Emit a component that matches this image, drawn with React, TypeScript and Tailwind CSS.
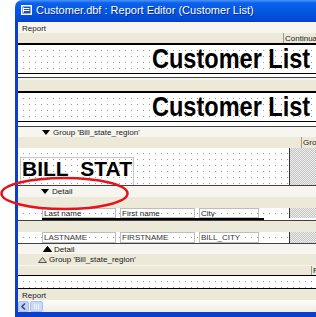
import React from "react"

const dots = "bg-[linear-gradient(90deg,#fff_5px,transparent_5px),linear-gradient(#fff_5px,#9a9a9a_5px)] bg-[length:6px_6px]"
const hatch = "bg-[repeating-conic-gradient(#c6c6c6_0%_25%,#ebebeb_0%_50%)] bg-[length:2px_2px]"
const beige = "bg-[#ece9d8]"
const light = "bg-[#f6f5ef]"

const DownTri = () => (
    <svg width="8" height="5" viewBox="0 0 8 5"><polygon points="0,0 8,0 4,5" fill="#000" /></svg>
)
const UpTri = ({ hollow }: { hollow?: boolean }) => (
    <svg width="9" height="6" viewBox="0 0 9 6">
        <polygon points="0.5,5.5 8.5,5.5 4.5,0.5" fill={hollow ? "#d8d6c8" : "#000"} stroke={hollow ? "#555" : "#000"} strokeWidth="1" />
    </svg>
)

const Field = ({ text, className }: { text: string, className: string }) => (
    <div className={`h-full border border-[#bdbdbd] pl-[1px] pt-[1px] whitespace-nowrap overflow-hidden ${className}`}>
        <span className="bg-white">{text}</span>
    </div>
)

export default function App() {
    return (
        <div className="relative w-[316px] h-[317px] overflow-hidden bg-white font-['Liberation_Sans',Arial,sans-serif] text-[8px] leading-[8px] text-[#1a1a1a]">
            <div className="ml-[15px] w-[320px] flex flex-col">
                {/* title bar */}
                <div className="h-[20px] rounded-tl-[7px] bg-[linear-gradient(to_bottom,#4a93f8_0%,#0b61ea_15%,#0458e4_55%,#0349d2_100%)] flex items-center pl-[6px] gap-[4px]">
                    <svg width="11" height="10" viewBox="0 0 11 10">
                        <rect x="0.5" y="0.5" width="10" height="9" fill="#fff" stroke="#fff" />
                        <rect x="1.5" y="1.5" width="8" height="7" fill="#1d4fc4" />
                        <rect x="3" y="3" width="5.5" height="1" fill="#fff" />
                        <rect x="3" y="5" width="5.5" height="1" fill="#fff" />
                        <rect x="2" y="2.5" width="1" height="5" fill="#fff" />
                    </svg>
                    <span className="text-white text-[11px] leading-[11px] [text-shadow:1px_1px_0_#0a2a8a]">Customer.dbf : Report Editor (Customer List)</span>
                </div>

                <div className="flex flex-col border-l-[3px] border-t-[2px] border-b-[5px] border-[#0a3fd0] bg-white">
                    {/* Report header */}
                    <div className={`h-[11px] ${light} pl-[4px] pt-[3px]`}>Report</div>
                    <div className={`h-[10px] ${beige} flex`}>
                        <div className="w-[265px] shrink-0" />
                        <div className="border-l border-[#9d9a88] pl-[1px] pt-[2px] whitespace-nowrap">Continuation</div>
                    </div>
                    <div className="h-[2px] bg-black" />
                    <div className={`h-[28px] ${dots} pl-[134px]`}>
                        <div className="origin-left scale-x-[0.84] whitespace-nowrap font-bold text-[28px] leading-[28px] text-black">Customer List</div>
                    </div>
                    <div className="h-[1px] bg-black" />
                    <div className={`h-[3px] ${dots}`} />
                    <div className="h-[1px] bg-[#404040]" />
                    <div className={`h-[13px] ${beige} border-t-2 border-[#f6f5ef]`} />
                    <div className="h-[2px] bg-black" />
                    <div className={`h-[28px] ${dots} pl-[134px]`}>
                        <div className="origin-left scale-x-[0.84] whitespace-nowrap font-bold text-[28px] leading-[28px] text-black">Customer List</div>
                    </div>
                    <div className="h-[1px] bg-black" />
                    <div className={`h-[4px] ${dots}`} />
                    <div className="h-[1px] bg-[#404040]" />

                    {/* group header */}
                    <div className={`h-[10px] ${light} flex items-center pl-[24px] gap-[3px]`}>
                        <DownTri />
                        <span className="pt-[1px]">Group 'Bill_state_region'</span>
                    </div>
                    <div className={`h-[11px] ${beige} flex`}>
                        <div className="w-[283px] shrink-0" />
                        <div className="border-l border-[#9d9a88] pl-[1px] pt-[2px] whitespace-nowrap">Group 'Bill_state_region'</div>
                    </div>
                    <div className="h-[37px] flex">
                        <div className={`w-[271px] shrink-0 ${dots} pl-[2px] pt-[9px]`}>
                            <div className="w-[114px] h-[28px] border border-b-0 border-[#c6c6c6] overflow-hidden whitespace-nowrap pl-[1px] font-bold text-[21px] leading-[22px] text-black">BILL_STATE_REGION</div>
                        </div>
                        <div className={`flex-1 border-l border-[#303030] ${hatch}`} />
                    </div>
                    <div className="h-[1px] bg-[#404040]" />

                    {/* detail */}
                    <div className={`h-[11px] ${light} flex items-center pl-[23px] gap-[3px]`}>
                        <DownTri />
                        <span className="pt-[1px]">Detail</span>
                    </div>
                    <div className={`h-[11px] ${beige}`} />
                    <div className="h-[10px] flex">
                        <div className={`w-[271px] shrink-0 ${dots} flex pl-[24px] gap-[4px]`}>
                            <Field text="Last name" className="w-[74px]" />
                            <Field text="First name" className="w-[75px]" />
                            <Field text="City" className="w-[60px]" />
                        </div>
                        <div className={`flex-1 border-l border-[#303030] ${hatch}`} />
                    </div>
                    <div className="h-[3px] border-b border-[#404040] bg-white">
                        <div className="ml-[24px] w-[222px] h-[2px] bg-black" />
                    </div>
                    <div className={`h-[11px] ${beige}`} />
                    <div className="h-[11px] flex text-[#333]">
                        <div className={`w-[271px] shrink-0 ${dots} flex pl-[24px] gap-[4px]`}>
                            <Field text="LASTNAME" className="w-[74px]" />
                            <Field text="FIRSTNAME" className="w-[75px]" />
                            <Field text="BILL_CITY" className="w-[60px]" />
                        </div>
                        <div className={`flex-1 border-l border-[#303030] ${hatch}`} />
                    </div>
                    <div className="h-[1px] bg-[#404040]" />
                    <div className={`h-[10px] ${light} flex items-center pl-[25px] gap-[2px]`}>
                        <UpTri />
                        <span className="pt-[1px]">Detail</span>
                    </div>
                    <div className={`h-[11px] ${beige} flex items-center pl-[20px] gap-[2px]`}>
                        <UpTri hollow />
                        <span className="pt-[1px]">Group 'Bill_state_region'</span>
                    </div>
                    <div className={`h-[10px] ${beige} border-t border-[#f7f6f0] flex`}>
                        <div className="w-[293px] shrink-0" />
                        <div className="border-l border-[#9d9a88] pl-[1px] pt-[1px] whitespace-nowrap">Footer</div>
                    </div>

                    {/* report footer */}
                    <div className="h-[1px] bg-black" />
                    <div className={`h-[12px] ${dots}`} />
                    <div className="h-[1px] bg-black" />
                    <div className={`h-[11px] ${beige} pl-[4px] pt-[3px]`}>Report</div>

                    {/* scroll bar */}
                    <div className="h-[12px] bg-[linear-gradient(to_bottom,#fdfdfb,#eeede6)] flex items-center">
                        <div className="w-[11px] h-[11px] rounded-[2px] bg-[#c3d4fb] border border-[#aac0f0] flex items-center justify-center">
                            <svg width="5" height="7" viewBox="0 0 5 7"><polyline points="4,0.5 1,3.5 4,6.5" fill="none" stroke="#3b4d8a" strokeWidth="1.6" /></svg>
                        </div>
                        <div className="ml-[1px] w-[13px] h-[11px] rounded-[2px] bg-[#cad9fc] border border-[#aac0f0] flex items-center justify-center gap-[1px]">
                            <div className="w-[1px] h-[5px] bg-[#eef3ff]" />
                            <div className="w-[1px] h-[5px] bg-[#eef3ff]" />
                            <div className="w-[1px] h-[5px] bg-[#eef3ff]" />
                        </div>
                    </div>
                </div>
            </div>

            {/* red annotation */}
            <svg className="absolute left-0 top-0 pointer-events-none" width="316" height="317">
                <ellipse cx="64.5" cy="193.5" rx="63" ry="15.5" fill="none" stroke="#e3141c" strokeWidth="2.5" />
            </svg>
        </div>
    )
}
